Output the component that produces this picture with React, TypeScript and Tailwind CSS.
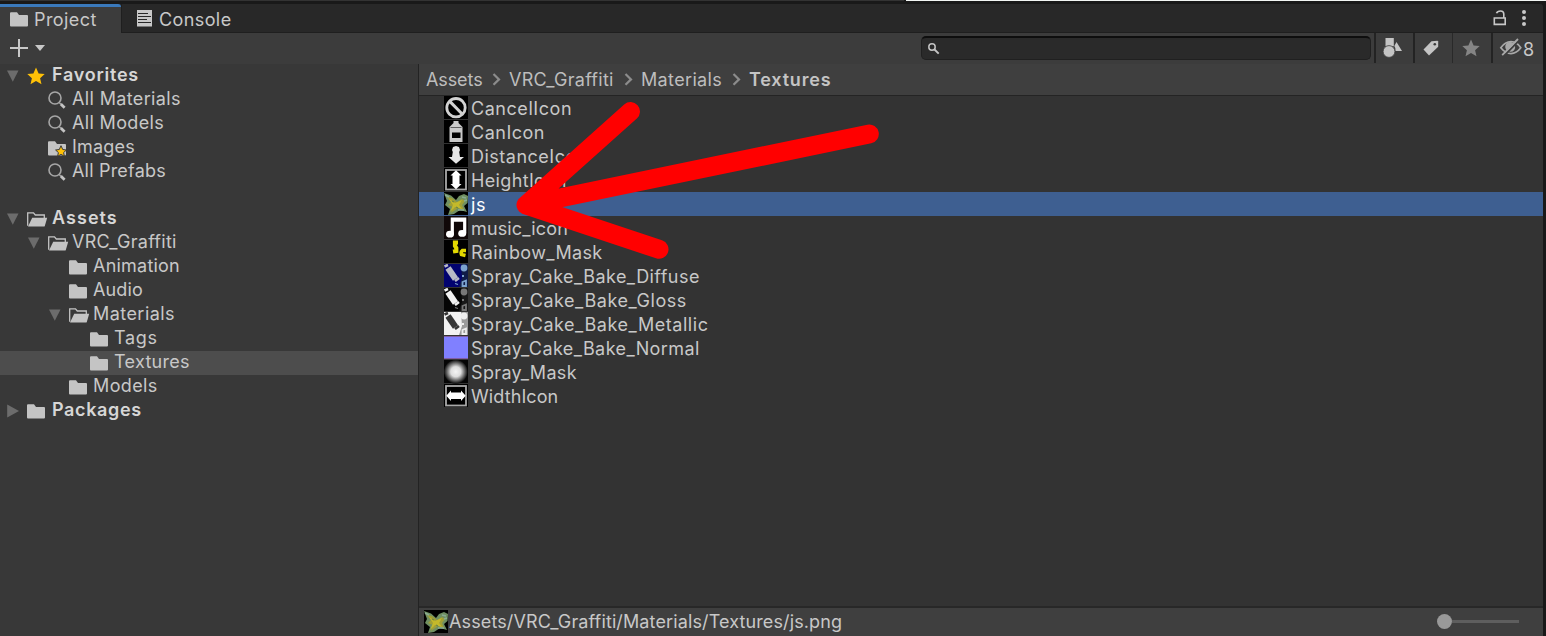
import React from "react";

const Folder = () => (
  <svg width="18" height="15" viewBox="0 0 18 15" fill="#c4c4c4">
    <path d="M1 .3H7L9 3H17Q18 3 18 4V13.6Q18 14.6 17 14.6H1Q0 14.6 0 13.6V1.3Q0 .3 1 .3Z" />
  </svg>
);

const OpenFolder = () => (
  <svg width="21" height="15" viewBox="0 0 21 15">
    <path d="M.7 13.8V.8H6.5L8.3 3H17.3V6" fill="none" stroke="#c4c4c4" strokeWidth="1.3" />
    <path d="M1 14.6L5.2 5.8H20.2L17.8 14Q17.5 14.6 17 14.6Z" fill="#c4c4c4" />
  </svg>
);

const Star = ({ size, color }: { size: number; color: string }) => (
  <svg width={size} height={size} viewBox="0 0 18 18">
    <path d="M9 .6L11.6 6.4L17.7 7L13.1 11.2L14.5 17.3L9 14.1L3.5 17.3L4.9 11.2L.3 7L6.4 6.4Z" fill={color} />
  </svg>
);

const Lens = () => (
  <svg width="18" height="18" viewBox="0 0 18 18" fill="none">
    <circle cx="7" cy="7" r="6" stroke="#a6a6a6" strokeWidth="1.6" />
    <path d="M11.2 11.4L12.7 12.9" stroke="#a6a6a6" strokeWidth="1.4" />
    <path d="M12.8 13L16.6 16.8" stroke="#c4c4c4" strokeWidth="2.8" />
  </svg>
);

const ImagesFolder = () => (
  <svg width="19" height="16" viewBox="0 0 19 16">
    <path d="M1 .3H7L9 3H17Q18 3 18 4V13.6Q18 14.6 17 14.6H1Q0 14.6 0 13.6V1.3Q0 .3 1 .3Z" fill="#c4c4c4" />
    <path d="M13 4.7L14.7 8.5L18.4 9L15.6 11.6L16.4 15.3L13 13.4L9.6 15.3L10.4 11.6L7.6 9L11.3 8.5Z" fill="#ffc107" stroke="#383838" strokeWidth="1" />
  </svg>
);

const Down = () => (
  <svg width="12" height="12" viewBox="0 0 12 12"><path d="M0 .5H11.5L5.8 11.8Z" fill="#6c6c6c" /></svg>
);
const Right = () => (
  <svg width="12" height="14" viewBox="0 0 12 14"><path d="M.2 .5V13.5L12 7Z" fill="#6c6c6c" /></svg>
);

type Kind = "star" | "lens" | "images" | "open" | "folder";
type Node = { label: string; kind: Kind; depth: 0 | 1 | 2 | 3; tracking: string; arrow?: "down" | "right"; selected?: boolean };

const favorites: Node[] = [
  { label: "Favorites", kind: "star", depth: 0, arrow: "down", tracking: "tracking-[0.75px]" },
  { label: "All Materials", kind: "lens", depth: 1, tracking: "tracking-[0.36px]" },
  { label: "All Models", kind: "lens", depth: 1, tracking: "tracking-[0.35px]" },
  { label: "Images", kind: "images", depth: 1, tracking: "tracking-[0.2px]" },
  { label: "All Prefabs", kind: "lens", depth: 1, tracking: "tracking-[0.2px]" },
];
const folders: Node[] = [
  { label: "Assets", kind: "open", depth: 0, arrow: "down", tracking: "tracking-[1.05px]" },
  { label: "VRC_Graffiti", kind: "open", depth: 1, arrow: "down", tracking: "tracking-[0.27px]" },
  { label: "Animation", kind: "folder", depth: 2, tracking: "tracking-[0.22px]" },
  { label: "Audio", kind: "folder", depth: 2, tracking: "tracking-[0.15px]" },
  { label: "Materials", kind: "open", depth: 2, arrow: "down", tracking: "tracking-[0.45px]" },
  { label: "Tags", kind: "folder", depth: 3, tracking: "tracking-[0.7px]" },
  { label: "Textures", kind: "folder", depth: 3, selected: true, tracking: "tracking-[0.3px]" },
  { label: "Models", kind: "folder", depth: 2, tracking: "tracking-[0.38px]" },
  { label: "Packages", kind: "folder", depth: 0, arrow: "right", tracking: "tracking-[0.63px]" },
];

const indent = { 0: "pl-[7px]", 1: "pl-[28px]", 2: "pl-[49px]", 3: "pl-[70px]" };
const iconTop = { star: "", lens: "", images: "pt-[2px]", open: "pt-px", folder: "pt-px" };

const kindIcon = (k: Kind) => {
  if (k === "star") return <Star size={18} color="#ffc107" />;
  if (k === "lens") return <Lens />;
  if (k === "images") return <ImagesFolder />;
  if (k === "open") return <OpenFolder />;
  return <Folder />;
};

const TreeRow = ({ node }: { node: Node }) => (
  <div className={`flex h-6 items-center ${indent[node.depth]} ${node.selected ? "bg-[#4d4d4d]" : ""}`}>
    <span className="flex w-5 shrink-0">
      {node.arrow === "down" && <Down />}
      {node.arrow === "right" && <Right />}
    </span>
    <span className={`flex w-6 shrink-0 ${iconTop[node.kind]}`}>{kindIcon(node.kind)}</span>
    <span className={`-mt-[2px] whitespace-nowrap ${node.tracking} ${node.depth === 0 ? "ml-px font-semibold text-[#d6d6d6]" : ""}`}>{node.label}</span>
  </div>
);

const JsThumb = () => (
  <svg width="24" height="24" viewBox="0 0 24 24">
    <defs><filter id="soft"><feGaussianBlur stdDeviation="0.6" /></filter></defs>
    <rect width="24" height="23" fill="#000" />
    <g filter="url(#soft)">
      <path d="M0 1L7 3.5L12 8L15 4L20 2L24 4L23.5 11L20 14L23 20L16 18L10 22L4 23L6 17L1 13L3 9Z" fill="#6f8f62" />
      <path d="M3 5L8 6L13 10L18 7L21 9L18 13L20 18L14 16L7 21L9 15L4 13L7 10Z" fill="#a09f35" />
      <path d="M5 7L11 11L18 8L15 13L18 17L11 15L6 20L9 13Z" fill="#c4b92c" />
      <path d="M1 3L5 5M18 5L22 6M20 9L23 8M14 18L20 18" stroke="#8aac91" strokeWidth="1.4" />
      <path d="M8 9L10 10M12 15L14 16" stroke="#6c8545" strokeWidth="1.2" />
    </g>
  </svg>
);

const Can = ({ bg, can, accent, spots }: { bg: string; can: string; accent: string; spots: string }) => (
  <svg width="24" height="24" viewBox="0 0 24 24">
    <defs><filter id="grain"><feGaussianBlur stdDeviation="0.45" /></filter></defs>
    <rect width="24" height="23" fill={bg} />
    <path d="M17 0H24V23H15L18 14Z" fill={accent} />
    <g filter="url(#grain)">
      <circle cx="20" cy="4" r="3.4" fill={spots} />
      <path d="M18 12L20 12M18.5 22V18L22 16.5V22Z" stroke={spots} fill="none" strokeWidth="1.8" />
      <path d="M11 19.5L14 20.5" stroke={spots} strokeWidth="1.3" />
      <path d="M4 4L11.5 15" stroke={can} strokeWidth="6.2" />
      <path d="M.5 2.5L4 1M11 17L15 14" stroke={can} strokeWidth="2.6" />
    </g>
  </svg>
);

const thumbs: { name: string; tracking: string; icon: React.ReactNode }[] = [
  { name: "CancelIcon", tracking: "tracking-[0.55px]", icon: (
    <svg width="24" height="24" viewBox="0 0 24 24">
      <rect width="24" height="23" fill="#000" />
      <circle cx="12" cy="11.7" r="9.2" fill="none" stroke="#d2d2d2" strokeWidth="2.8" />
      <path d="M5.8 5.4L18.2 18" stroke="#d2d2d2" strokeWidth="3" />
    </svg>
  ) },
  { name: "CanIcon", tracking: "tracking-[0.5px]", icon: (
    <svg width="24" height="24" viewBox="0 0 24 24">
      <rect width="24" height="23" fill="#000" />
      <path d="M9.5 1H14.5V3L18.5 7V22H5.5V7L9.5 3Z" fill="#c9c9c9" />
      <path d="M6.5 7.5H17.5" stroke="#5f5f5f" strokeWidth="1" />
      <rect x="8" y="12.5" width="8.5" height="5.5" fill="#000" />
    </svg>
  ) },
  { name: "DistanceIcon", tracking: "tracking-[0.5px]", icon: (
    <svg width="24" height="24" viewBox="0 0 24 24">
      <rect width="24" height="23" fill="#000" />
      <path d="M8 6L9 3L12 2L15 3L16 6L15.2 8L16 13H20L12 19.8L4.5 13H8L8.8 8Z" fill="#e6e6e6" />
    </svg>
  ) },
  { name: "HeightIcon", tracking: "tracking-[0.35px]", icon: (
    <svg width="24" height="24" viewBox="0 0 24 24">
      <rect width="24" height="23" fill="#000" />
      <rect x="2" y="2" width="20" height="19.5" fill="none" stroke="#a8a8a8" strokeWidth="1.8" />
      <path d="M12 2.3L17.5 7.5H15.5V16H17.5L12 21.2L6.5 16H8.5V7.5H6.5Z" fill="#fff" />
    </svg>
  ) },
  { name: "js", tracking: "tracking-[0.55px]", icon: <JsThumb /> },
  { name: "music_icon", tracking: "tracking-[0.15px]", icon: (
    <svg width="24" height="24" viewBox="0 0 24 24">
      <rect width="24" height="23" fill="#100808" />
      <path d="M8.3 18V3.2H20.7V17M8 4.2H20" fill="none" stroke="#fff" strokeWidth="3.2" />
      <ellipse cx="6" cy="18.2" rx="4" ry="3.4" fill="#fff" />
      <ellipse cx="18.2" cy="17.4" rx="4" ry="3.4" fill="#fff" />
    </svg>
  ) },
  { name: "Rainbow_Mask", tracking: "tracking-[0.35px]", icon: (
    <svg width="24" height="24" viewBox="0 0 24 24">
      <rect width="24" height="23" fill="#000" />
      <path d="M14 2.5H11V6L12.3 8V11L9 11.5" fill="none" stroke="#e2d800" strokeWidth="4.2" />
      <path d="M22 10.5H18.5Q16.5 12 17.5 14.5L21.5 15.5" fill="none" stroke="#e2d800" strokeWidth="3.6" />
    </svg>
  ) },
  { name: "Spray_Cake_Bake_Diffuse", tracking: "tracking-[0.44px]", icon: <Can bg="#02036f" can="#b9bac6" accent="#101c48" spots="#7ba3cf" /> },
  { name: "Spray_Cake_Bake_Gloss", tracking: "tracking-[0.55px]", icon: <Can bg="#050505" can="#f1f1f1" accent="#181818" spots="#777777" /> },
  { name: "Spray_Cake_Bake_Metallic", tracking: "tracking-[0.55px]", icon: <Can bg="#f2f2f2" can="#353535" accent="#9b9b9b" spots="#eeeeee" /> },
  { name: "Spray_Cake_Bake_Normal", tracking: "tracking-[0.41px]", icon: (
    <svg width="24" height="24" viewBox="0 0 24 24">
      <rect width="24" height="23" fill="#8080ff" /><path d="M0 .4H24M0 22.6H24" stroke="#805080" strokeWidth=".8" />
    </svg>
  ) },
  { name: "Spray_Mask", tracking: "tracking-[0.35px]", icon: (
    <svg width="24" height="24" viewBox="0 0 24 24">
      <defs><radialGradient id="glow"><stop offset="0" stopColor="#f5f5f5" /><stop offset=".42" stopColor="#dedede" /><stop offset="1" stopColor="#070707" /></radialGradient></defs>
      <rect width="24" height="23" fill="#050505" /><circle cx="11.8" cy="11.7" r="12" fill="url(#glow)" />
    </svg>
  ) },
  { name: "WidthIcon", tracking: "tracking-[0.1px]", icon: (
    <svg width="24" height="24" viewBox="0 0 24 24">
      <rect width="24" height="23" fill="#000" />
      <rect x="2" y="2" width="20" height="19.5" fill="none" stroke="#a8a8a8" strokeWidth="1.8" />
      <path d="M2.3 11.7L7 6.5V8.5H17V6.5L21.7 11.7L17 17V15H7V17Z" fill="#fff" />
    </svg>
  ) },
];

const Chevron = () => (
  <svg width="9" height="13" viewBox="0 0 9 13" fill="none"><path d="M1.5 1L7 6.4L1.5 11.8" stroke="#8c8c8c" strokeWidth="2.2" /></svg>
);

export default function App() {
  return (
    <div className="relative flex h-[636px] w-[1546px] flex-col overflow-hidden bg-[#191919] font-['Inter',sans-serif] text-[18px] leading-6 tracking-[0.55px] text-[#c8c8c8]">
      <div className="flex h-1 shrink-0 items-start bg-[#191919]">
        <div className="h-px w-[904px] bg-[#333333]" />
        <div className="ml-[2px] h-px grow bg-[#f2f5f3]" />
      </div>
      <div className="mr-[3px] flex h-[29px] shrink-0 rounded-tr-[3px] bg-[#282828]">
        <div className="flex w-[121px] items-center rounded-tr-[3px] border-t-[3px] border-[#3a79bb] bg-[#3c3c3c] pl-[10px]">
          <span className="-mt-px flex w-6"><Folder /></span>
          <span className="-mt-px tracking-[0.42px]">Project</span>
        </div>
        <div className="flex grow items-center border-b border-l border-[#1f1f1f] pl-[15px] pr-[17px]">
          <svg width="15" height="17" viewBox="0 0 15 17">
            <rect width="15" height="16.5" fill="#c8c8c8" />
            <path d="M1 3.5H11M1 6.5H14M1 9.5H10M1 12.5H14" stroke="#282828" strokeWidth="1" />
          </svg>
          <span className="ml-[7px] mt-[3px] grow tracking-[0.4px]">Console</span>
          <svg className="mr-[16px]" width="13" height="16" viewBox="0 0 13 16" fill="none" stroke="#c8c8c8" strokeWidth="1.6">
            <path d="M1.3 8H12.2V14.4H1.3ZM10.8 8V4Q10.8 1 7.5 1Q4.4 1 3.5 3.3" />
          </svg>
          <svg width="4" height="16" viewBox="0 0 4 16" fill="#c8c8c8"><circle cx="2" cy="2" r="2" /><circle cx="2" cy="8" r="2" /><circle cx="2" cy="14" r="2" /></svg>
        </div>
      </div>
      <div className="mr-[3px] flex h-[31px] shrink-0 items-start bg-[#3c3c3c]">
        <div className="flex h-[30px] grow items-center pl-[10px]">
          <svg width="18" height="18" viewBox="0 0 18 18"><path d="M9 0V18M0 9H18" stroke="#c8c8c8" strokeWidth="2" /></svg>
          <svg className="ml-[7px]" width="10" height="6" viewBox="0 0 10 6"><path d="M0 0H10L5 6Z" fill="#c8c8c8" /></svg>
        </div>
        <div className="mr-[3px] mt-[3px] flex h-6 w-[450px] items-center rounded-[5px] border border-t-2 border-[#202020] border-t-[#0e0e0e] bg-[#2a2a2a] pl-[6px]">
          <svg width="12" height="12" viewBox="0 0 12 12" fill="none" stroke="#c4c4c4"><circle cx="4" cy="4" r="3.2" strokeWidth="1.5" /><path d="M6.5 6.5L10.7 10.7" strokeWidth="1.9" /></svg>
        </div>
        <div className="flex h-[30px] w-[39px] border-l-2 border-[#232323] pl-[7px] pt-[4px]">
          <svg width="20" height="21" viewBox="0 0 20 21" fill="#c4c4c4"><path d="M2.5 1H10.8V9.3H2.5ZM13.5 5L19 14H12.5Q13 11 11.3 9Z" /><circle cx="6" cy="14.5" r="5.9" stroke="#3c3c3c" strokeWidth=".8" /></svg>
        </div>
        <div className="flex h-[30px] w-[39px] border-l-2 border-[#232323] pl-[8px] pt-[7px]">
          <svg width="17" height="17" viewBox="0 0 17 17"><path d="M8.5 1.2L14.5 .7L15.2 1.4V6.8L6 15.6L.5 9.5Z" fill="#c4c4c4" /><circle cx="11.8" cy="4.2" r="1.3" fill="#3c3c3c" /></svg>
        </div>
        <div className="flex h-[30px] w-[39px] border-l border-[#292929] pl-[9px] pt-[6px]"><Star size={18} color="#858585" /></div>
        <div className="flex h-[30px] w-[52px] border-l-2 border-[#232323] pl-[6px] pt-[4px]">
          <svg width="24" height="20" viewBox="0 0 24 20" fill="none" stroke="#a8a8a8">
            <path d="M1.8 10.8Q6 4.6 12 4.6T21.8 10.8Q17.5 16.6 12 16.6T1.8 10.8Z" strokeWidth="1.7" />
            <path d="M8 13.5A4.5 4.5 0 0 1 14 6L16 9A4.5 4.5 0 0 1 11 14.8Z" fill="#a8a8a8" stroke="none" />
            <path d="M4.8 19L20.4 3" stroke="#3c3c3c" strokeWidth="1.8" /><path d="M3.2 18.2L19 2" strokeWidth="1.8" />
          </svg>
          <span className="mt-px text-[18px] tracking-normal">8</span>
        </div>
      </div>
      <div className="mr-[3px] flex min-h-0 grow">
        <aside className="w-[418px] shrink-0 bg-[#383838]">
          {favorites.map((n) => <TreeRow key={n.label} node={n} />)}
          <div className="h-[23px]" />
          {folders.map((n) => <TreeRow key={n.label} node={n} />)}
        </aside>
        <main className="flex grow flex-col border-l border-[#232323] bg-[#333333]">
          <nav className="flex h-8 shrink-0 items-center border-b border-[#242424] bg-[#3f3f3f] pl-[7px] text-[#bdbdbd]">
            <span className="w-[66px] -tracking-[0.1px]">Assets</span><Chevron />
            <span className="ml-[8px] w-[115px] tracking-[0.27px]">VRC_Graffiti</span><Chevron />
            <span className="ml-[8px] w-[91px] tracking-[0.35px]">Materials</span><Chevron />
            <span className="ml-[8px] font-semibold tracking-[0.8px] text-[#c4c4c4]">Textures</span>
          </nav>
          <div className="grow">
            {thumbs.map((t) => (
              <div key={t.name} className={`flex h-6 items-center pl-[25px] ${t.name === "js" ? "bg-[#3e5f91] text-white" : ""}`}>
                {t.icon}
                <span className={`ml-[3px] mt-[2px] ${t.tracking}`}>{t.name}</span>
              </div>
            ))}
          </div>
          <footer className="flex h-[30px] shrink-0 items-center border-t-2 border-[#282828] bg-[#3f3f3f] pl-[5px] pr-[24px]">
            <JsThumb />
            <span className="ml-px grow tracking-[0.12px]">Assets/VRC_Graffiti/Materials/Textures/js.png</span>
            <div className="mb-px h-[15px] w-[15px] rounded-full bg-[#999999]" />
            <div className="mb-px h-[3px] w-[67px] bg-[#5e5e5e]" />
          </footer>
        </main>
      </div>
      <svg className="pointer-events-none absolute left-[500px] top-[90px]" width="400" height="180" viewBox="500 90 400 180" fill="none">
        <path d="M630.5 111.5L526 205L869.3 134M526 205L659 249.3" stroke="#ff0000" strokeWidth="19" strokeLinecap="round" strokeLinejoin="round" />
      </svg>
    </div>
  );
}
